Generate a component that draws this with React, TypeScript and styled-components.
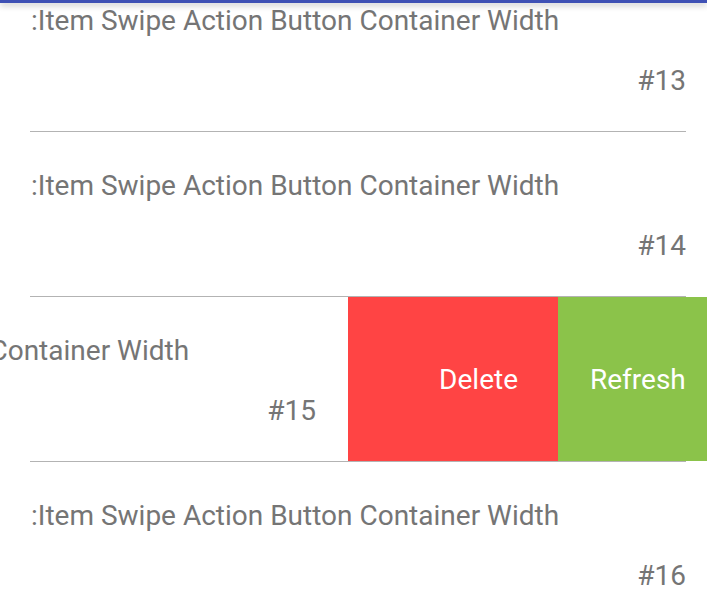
import React from "react";
import styled, { createGlobalStyle } from "styled-components";

const Global = createGlobalStyle`
  html, body { margin: 0; padding: 0; background: #ffffff; }
  body { font-family: Roboto, "Noto Sans", sans-serif; }
`;

const Screen = styled.div`
  position: relative;
  width: 707px;
  height: 612px;
  overflow: hidden;
  background: #ffffff;
`;

const AppBarEdge = styled.div`
  position: absolute;
  top: 0;
  left: 0;
  right: 0;
  height: 3px;
  background: #3f51b5;
  box-shadow: 0 2px 6px rgba(0, 0, 0, 0.3);
  z-index: 2;
`;

const List = styled.div`
  display: flex;
  flex-direction: column;
  margin-top: -33px;
`;

const Row = styled.div`
  position: relative;
  height: 164px;
  overflow: hidden;
`;

const Content = styled.div<{ $offset: number }>`
  box-sizing: border-box;
  width: 707px;
  height: 164px;
  padding: 0 21px 0 31px;
  display: flex;
  flex-direction: column;
  transform: translateX(${(p) => -p.$offset}px);
  color: #757575;
  font-size: 28px;
`;

const Title = styled.div`
  margin-top: 39px;
  line-height: 30px;
  white-space: nowrap;
`;

const Number = styled.div`
  margin-top: 30px;
  line-height: 30px;
  text-align: right;
  white-space: nowrap;
`;

const Actions = styled.div`
  position: absolute;
  top: 0;
  bottom: 0;
  left: 348px;
  right: 0;
  display: flex;
`;

const ActionButton = styled.div<{ $bg: string; $width: string; $align: string; $pad: string }>`
  box-sizing: border-box;
  flex: ${(p) => p.$width};
  background: ${(p) => p.$bg};
  color: #ffffff;
  font-size: 28px;
  display: flex;
  align-items: center;
  justify-content: ${(p) => p.$align};
  padding: ${(p) => p.$pad};
  white-space: nowrap;
`;

const Divider = styled.div`
  height: 1px;
  margin: 0 21px 0 30px;
  background: #b3b3b3;
`;

const items = [13, 14, 15, 16];

export default function App() {
  return (
    <Screen>
      <Global />
      <AppBarEdge />
      <List>
        {items.map((n, i) => (
          <React.Fragment key={n}>
            <Row>
              <Content $offset={n === 15 ? 370 : 0}>
                <Title>:Item Swipe Action Button Container Width</Title>
                <Number>#{n}</Number>
              </Content>
              {n === 15 && (
                <Actions>
                  <ActionButton $bg="#ff4444" $width="0 0 210px" $align="flex-end" $pad="0 40px 0 0">
                    Delete
                  </ActionButton>
                  <ActionButton $bg="#8bc34a" $width="1 1 auto" $align="flex-start" $pad="0 0 0 32px">
                    Refresh
                  </ActionButton>
                </Actions>
              )}
            </Row>
            {i < items.length - 1 && <Divider />}
          </React.Fragment>
        ))}
      </List>
    </Screen>
  );
}
